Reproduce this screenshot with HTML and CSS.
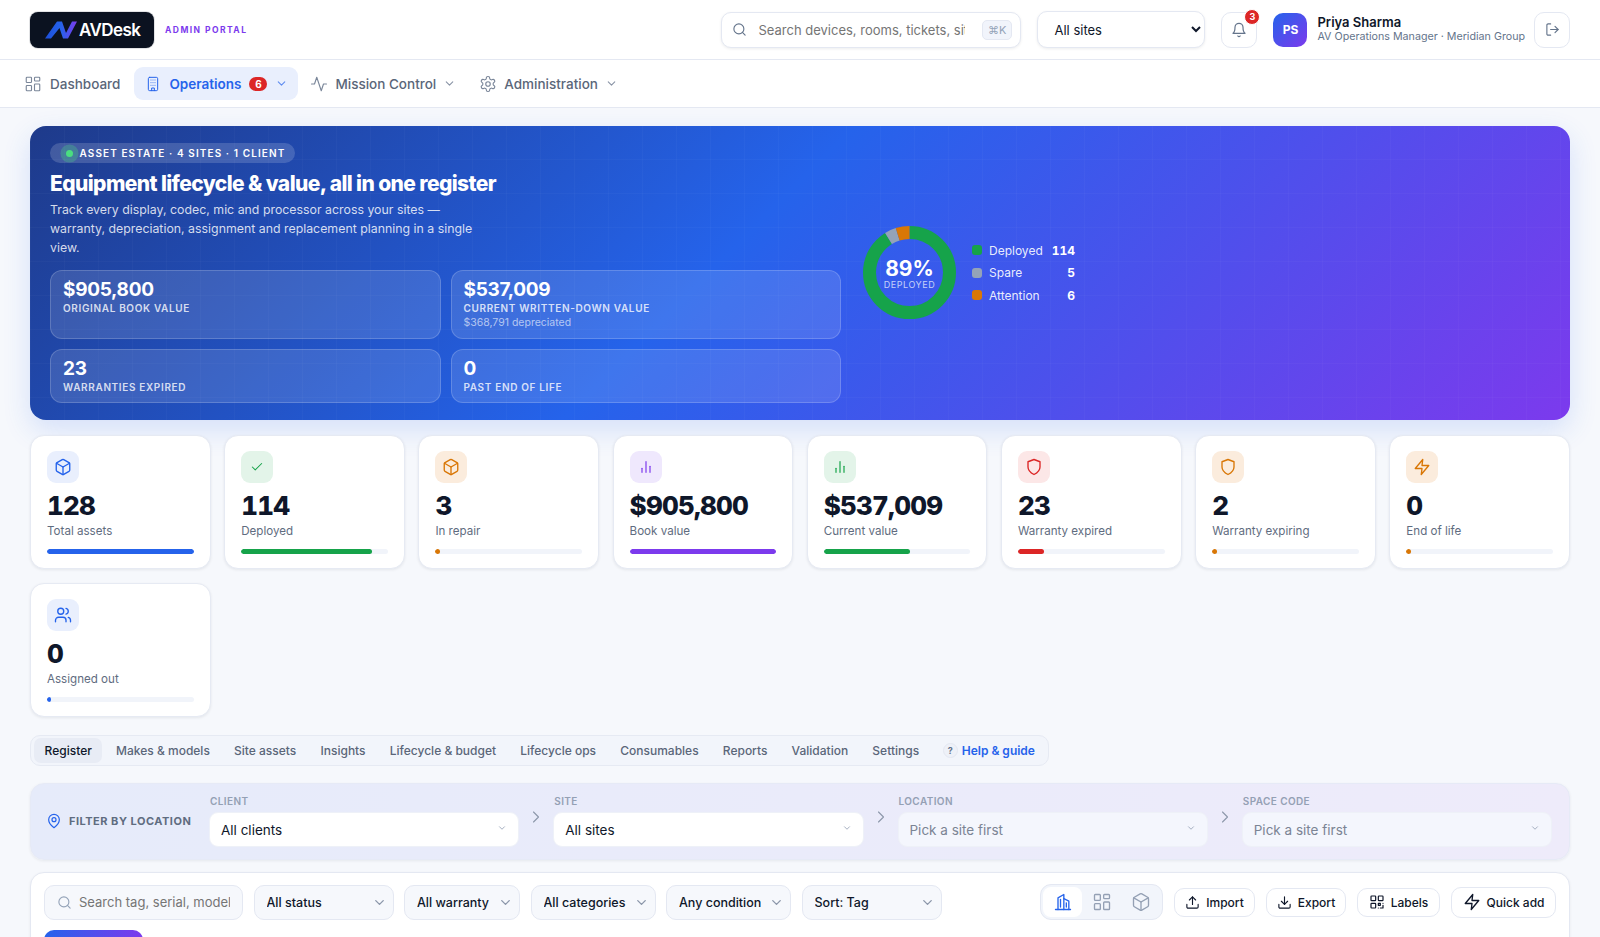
FILE: index.html
```html
<!DOCTYPE html>
<html lang="en">
<head>
<meta charset="utf-8">
<title>AVDesk Admin Portal</title>
<link rel="stylesheet" href="styles.css">
</head>
<body>
<svg class="defs" width="0" height="0" aria-hidden="true">
  <defs>
    <linearGradient id="logoGrad" x1="0" y1="0" x2="1" y2="0"><stop offset="0" stop-color="#1d4ed8"/><stop offset=".5" stop-color="#2563eb"/><stop offset="1" stop-color="#7c3aed"/></linearGradient>
    <symbol id="i-chev" viewBox="0 0 24 24"><path d="m6 9 6 6 6-6"/></symbol>
    <symbol id="i-chevr" viewBox="0 0 24 24"><path d="m9 6 6 6-6 6"/></symbol>
    <symbol id="i-search" viewBox="0 0 24 24"><circle cx="11" cy="11" r="8"/><path d="m21 21-4.3-4.3"/></symbol>
    <symbol id="i-box" viewBox="0 0 24 24"><path d="M21 8a2 2 0 0 0-1-1.73l-7-4a2 2 0 0 0-2 0l-7 4A2 2 0 0 0 3 8v8a2 2 0 0 0 1 1.73l7 4a2 2 0 0 0 2 0l7-4A2 2 0 0 0 21 16Z"/><path d="m3.3 7 8.7 5 8.7-5"/><path d="M12 22V12"/></symbol>
    <symbol id="i-bars" viewBox="0 0 24 24"><path d="M12 20V4"/><path d="M18 20v-9"/><path d="M6 20v-6"/></symbol>
    <symbol id="i-shield" viewBox="0 0 24 24"><path d="M12 22s8-4 8-10V5l-8-3-8 3v7c0 6 8 10 8 10z"/></symbol>
    <symbol id="i-zap" viewBox="0 0 24 24"><path d="M13 2 3 14h9l-1 8 10-12h-9l1-8z"/></symbol>
    <symbol id="i-dash" viewBox="0 0 24 24"><rect x="3" y="3" width="7" height="7" rx="1"/><rect x="14" y="3" width="7" height="5" rx="1"/><rect x="14" y="12" width="7" height="9" rx="1"/><rect x="3" y="14" width="7" height="7" rx="1"/></symbol>
  </defs>
</svg>

<div class="app">
  <header class="topbar">
    <div class="brand">
      <div class="logo">
        <svg class="logo-mark" viewBox="0 0 32 18" aria-hidden="true"><path fill="url(#logoGrad)" d="M0 17.5 12 .5h5l4 11.5L27 .5h5l-9 17h-5L14.5 7 6 17.5z"/></svg>
        <span class="logo-text">AVDesk</span>
      </div>
      <span class="portal">ADMIN PORTAL</span>
    </div>
    <div class="top-actions">
      <label class="top-search">
        <svg class="ico ico-15 c-slate"><use href="#i-search"/></svg>
        <input type="text" placeholder="Search devices, rooms, tickets, sites">
        <kbd>⌘K</kbd>
      </label>
      <select class="top-select"><option>All sites</option></select>
      <button class="icon-btn bell">
        <svg class="ico ico-16 c-slate" viewBox="0 0 24 24"><path d="M6 8a6 6 0 0 1 12 0c0 7 3 9 3 9H3s3-2 3-9"/><path d="M10.3 21a1.94 1.94 0 0 0 3.4 0"/></svg>
        <span class="bell-badge">3</span>
      </button>
      <div class="user">
        <div class="avatar">PS</div>
        <div class="user-text">
          <div class="user-name">Priya Sharma</div>
          <div class="user-role">AV Operations Manager · Meridian Group</div>
        </div>
      </div>
      <button class="icon-btn logout">
        <svg class="ico ico-15 c-slate" viewBox="0 0 24 24"><path d="M9 21H5a2 2 0 0 1-2-2V5a2 2 0 0 1 2-2h4"/><path d="m16 17 5-5-5-5"/><path d="M21 12H9"/></svg>
      </button>
    </div>
  </header>

  <nav class="mainnav">
    <a class="nav-item"><svg class="ico ico-18"><use href="#i-dash"/></svg>Dashboard</a>
    <a class="nav-item active">
      <svg class="ico ico-16" viewBox="0 0 24 24"><rect x="5" y="2" width="14" height="20" rx="2"/><path d="M10 22v-4h4v4M9 6h.01M12 6h.01M15 6h.01M9 10h.01M12 10h.01M15 10h.01M9 14h.01M12 14h.01M15 14h.01"/></svg>
      Operations<span class="nav-badge">6</span><svg class="ico ico-13 nav-chev"><use href="#i-chev"/></svg>
    </a>
    <a class="nav-item">
      <svg class="ico ico-18" viewBox="0 0 24 24"><path d="M22 12h-4l-3 9L9 3l-3 9H2"/></svg>
      Mission Control<svg class="ico ico-13 nav-chev"><use href="#i-chev"/></svg>
    </a>
    <a class="nav-item">
      <svg class="ico ico-18" viewBox="0 0 24 24"><path d="M12.22 2h-.44a2 2 0 0 0-2 2v.18a2 2 0 0 1-1 1.73l-.43.25a2 2 0 0 1-2 0l-.15-.08a2 2 0 0 0-2.73.73l-.22.38a2 2 0 0 0 .73 2.73l.15.1a2 2 0 0 1 1 1.72v.51a2 2 0 0 1-1 1.74l-.15.09a2 2 0 0 0-.73 2.73l.22.38a2 2 0 0 0 2.73.73l.15-.08a2 2 0 0 1 2 0l.43.25a2 2 0 0 1 1 1.73V20a2 2 0 0 0 2 2h.44a2 2 0 0 0 2-2v-.18a2 2 0 0 1 1-1.73l.43-.25a2 2 0 0 1 2 0l.15.08a2 2 0 0 0 2.73-.73l.22-.39a2 2 0 0 0-.73-2.73l-.15-.08a2 2 0 0 1-1-1.74v-.5a2 2 0 0 1 1-1.74l.15-.09a2 2 0 0 0 .73-2.73l-.22-.38a2 2 0 0 0-2.73-.73l-.15.08a2 2 0 0 1-2 0l-.43-.25a2 2 0 0 1-1-1.73V4a2 2 0 0 0-2-2z"/><circle cx="12" cy="12" r="3"/></svg>
      Administration<svg class="ico ico-13 nav-chev"><use href="#i-chev"/></svg>
    </a>
  </nav>

  <main class="content">
    <section class="hero">
      <div class="hero-left">
        <div class="hero-badge"><span class="pulse"></span>ASSET ESTATE · 4 SITES · 1 CLIENT</div>
        <h1>Equipment lifecycle &amp; value, all in one register</h1>
        <p>Track every display, codec, mic and processor across your sites — warranty, depreciation, assignment and replacement planning in a single view.</p>
        <div class="hero-stats">
          <div class="hstat"><div class="hstat-val">$905,800</div><div class="hstat-lab">ORIGINAL BOOK VALUE</div></div>
          <div class="hstat"><div class="hstat-val">$537,009</div><div class="hstat-lab">CURRENT WRITTEN-DOWN VALUE</div><div class="hstat-sub">$368,791 depreciated</div></div>
          <div class="hstat"><div class="hstat-val">23</div><div class="hstat-lab">WARRANTIES EXPIRED</div></div>
          <div class="hstat"><div class="hstat-val">0</div><div class="hstat-lab">PAST END OF LIFE</div></div>
        </div>
      </div>
      <div class="hero-chart">
        <div class="donut">
          <svg viewBox="0 0 93 93" width="93" height="93" aria-hidden="true">
            <g fill="none" stroke-width="13" transform="rotate(-90 46.5 46.5)">
              <circle cx="46.5" cy="46.5" r="40" pathLength="100" stroke="#16a34a" stroke-dasharray="91.2 8.8"/>
              <circle cx="46.5" cy="46.5" r="40" pathLength="100" stroke="#94a3b8" stroke-dasharray="4 96" stroke-dashoffset="-91.2"/>
              <circle cx="46.5" cy="46.5" r="40" pathLength="100" stroke="#d97706" stroke-dasharray="4.8 95.2" stroke-dashoffset="-95.2"/>
            </g>
          </svg>
          <div class="donut-center"><b>89%</b><span>DEPLOYED</span></div>
        </div>
        <ul class="legend">
          <li><i class="dot d-green"></i><span>Deployed</span><b>114</b></li>
          <li><i class="dot d-gray"></i><span>Spare</span><b>5</b></li>
          <li><i class="dot d-orange"></i><span>Attention</span><b>6</b></li>
        </ul>
      </div>
    </section>

    <section class="kpis">
      <article class="kpi"><div class="kpi-ico t-blue"><svg class="ico ico-18"><use href="#i-box"/></svg></div><div class="kpi-val">128</div><div class="kpi-lab">Total assets</div><div class="bar"><span class="b-blue" style="width:100%"></span></div></article>
      <article class="kpi"><div class="kpi-ico t-green"><svg class="ico ico-14" viewBox="0 0 24 24"><path d="M20 6 9 17l-5-5"/></svg></div><div class="kpi-val">114</div><div class="kpi-lab">Deployed</div><div class="bar"><span class="b-green" style="width:89%"></span></div></article>
      <article class="kpi"><div class="kpi-ico t-orange"><svg class="ico ico-18"><use href="#i-box"/></svg></div><div class="kpi-val">3</div><div class="kpi-lab">In repair</div><div class="bar"><span class="b-orange" style="width:3%"></span></div></article>
      <article class="kpi"><div class="kpi-ico t-purple"><svg class="ico ico-16"><use href="#i-bars"/></svg></div><div class="kpi-val">$905,800</div><div class="kpi-lab">Book value</div><div class="bar"><span class="b-purple" style="width:100%"></span></div></article>
      <article class="kpi"><div class="kpi-ico t-green"><svg class="ico ico-16"><use href="#i-bars"/></svg></div><div class="kpi-val">$537,009</div><div class="kpi-lab">Current value</div><div class="bar"><span class="b-green" style="width:59%"></span></div></article>
      <article class="kpi"><div class="kpi-ico t-red"><svg class="ico ico-18"><use href="#i-shield"/></svg></div><div class="kpi-val">23</div><div class="kpi-lab">Warranty expired</div><div class="bar"><span class="b-red" style="width:18%"></span></div></article>
      <article class="kpi"><div class="kpi-ico t-orange"><svg class="ico ico-18"><use href="#i-shield"/></svg></div><div class="kpi-val">2</div><div class="kpi-lab">Warranty expiring</div><div class="bar"><span class="b-orange" style="width:3%"></span></div></article>
      <article class="kpi"><div class="kpi-ico t-orange"><svg class="ico ico-18"><use href="#i-zap"/></svg></div><div class="kpi-val">0</div><div class="kpi-lab">End of life</div><div class="bar"><span class="b-orange" style="width:3%"></span></div></article>
      <article class="kpi"><div class="kpi-ico t-blue"><svg class="ico ico-18" viewBox="0 0 24 24"><path d="M16 21v-2a4 4 0 0 0-4-4H6a4 4 0 0 0-4 4v2"/><circle cx="9" cy="7" r="4"/><path d="M22 21v-2a4 4 0 0 0-3-3.87"/><path d="M16 3.13a4 4 0 0 1 0 7.75"/></svg></div><div class="kpi-val">0</div><div class="kpi-lab">Assigned out</div><div class="bar"><span class="b-blue" style="width:3%"></span></div></article>
    </section>

    <div class="tabs">
      <a class="tab on">Register</a><a class="tab">Makes &amp; models</a><a class="tab">Site assets</a><a class="tab">Insights</a><a class="tab">Lifecycle &amp; budget</a><a class="tab">Lifecycle ops</a><a class="tab">Consumables</a><a class="tab">Reports</a><a class="tab">Validation</a><a class="tab">Settings</a>
      <a class="tab help"><span class="q">?</span>Help &amp; guide</a>
    </div>

    <section class="locbar">
      <div class="loc-title">
        <svg class="ico ico-16 c-blue" viewBox="0 0 24 24"><path d="M20 10c0 6-8 12-8 12s-8-6-8-12a8 8 0 0 1 16 0Z"/><circle cx="12" cy="10" r="3"/></svg>
        FILTER BY LOCATION
      </div>
      <div class="loc-fields">
        <div class="loc-field"><label>CLIENT</label><div class="sel"><select><option>All clients</option></select><svg class="ico sel-chev"><use href="#i-chev"/></svg></div></div>
        <svg class="ico loc-sep"><use href="#i-chevr"/></svg>
        <div class="loc-field"><label>SITE</label><div class="sel"><select><option>All sites</option></select><svg class="ico sel-chev"><use href="#i-chev"/></svg></div></div>
        <svg class="ico loc-sep"><use href="#i-chevr"/></svg>
        <div class="loc-field"><label>LOCATION</label><div class="sel off"><select disabled><option>Pick a site first</option></select><svg class="ico sel-chev"><use href="#i-chev"/></svg></div></div>
        <svg class="ico loc-sep"><use href="#i-chevr"/></svg>
        <div class="loc-field"><label>SPACE CODE</label><div class="sel off"><select disabled><option>Pick a site first</option></select><svg class="ico sel-chev"><use href="#i-chev"/></svg></div></div>
      </div>
    </section>

    <section class="register">
      <div class="toolbar">
        <div class="filters">
          <label class="t-search"><svg class="ico ico-15 c-muted"><use href="#i-search"/></svg><input type="text" placeholder="Search tag, serial, model…"></label>
          <div class="tsel w-status"><select><option>All status</option></select><svg class="ico tsel-chev"><use href="#i-chev"/></svg></div>
          <div class="tsel w-warranty"><select><option>All warranty</option></select><svg class="ico tsel-chev"><use href="#i-chev"/></svg></div>
          <div class="tsel w-cat"><select><option>All categories</option></select><svg class="ico tsel-chev"><use href="#i-chev"/></svg></div>
          <div class="tsel w-cond"><select><option>Any condition</option></select><svg class="ico tsel-chev"><use href="#i-chev"/></svg></div>
          <div class="tsel w-sort"><select><option>Sort: Tag</option></select><svg class="ico tsel-chev"><use href="#i-chev"/></svg></div>
        </div>
        <div class="actions">
          <div class="views">
            <button class="view on"><svg class="ico ico-18" viewBox="0 0 24 24"><path d="M3 21h18"/><path d="M6 21V7l7-4v18"/><path d="M13 8l6 3v10"/><path d="M9 9v9"/><path d="M16 13v5"/></svg></button>
            <button class="view"><svg class="ico ico-18"><use href="#i-dash"/></svg></button>
            <button class="view"><svg class="ico ico-18"><use href="#i-box"/></svg></button>
          </div>
          <button class="btn w-import"><svg class="ico ico-15" viewBox="0 0 24 24"><path d="M21 15v4a2 2 0 0 1-2 2H5a2 2 0 0 1-2-2v-4"/><path d="m17 8-5-5-5 5"/><path d="M12 3v12"/></svg>Import</button>
          <button class="btn w-export"><svg class="ico ico-15" viewBox="0 0 24 24"><path d="M21 15v4a2 2 0 0 1-2 2H5a2 2 0 0 1-2-2v-4"/><path d="m7 10 5 5 5-5"/><path d="M12 15V3"/></svg>Export</button>
          <button class="btn w-labels"><svg class="ico ico-16" viewBox="0 0 24 24"><rect x="3" y="3" width="7" height="7" rx="1"/><rect x="14" y="3" width="7" height="7" rx="1"/><rect x="3" y="14" width="7" height="7" rx="1"/><path d="M14 14h3v3h-3zM21 14v.01M21 21h-4M14 21v-.01M21 17v4"/></svg>Labels</button>
          <button class="btn quick"><svg class="ico ico-18"><use href="#i-zap"/></svg>Quick add</button>
        </div>
      </div>
      <button class="add-btn" aria-label="Add asset"></button>
    </section>
  </main>
</div>
</body>
</html>
```
FILE: styles.css
```css
* { box-sizing: border-box; }
html, body { margin: 0; height: 100%; overflow: hidden; }
body { font-family: Inter, "Liberation Sans", sans-serif; color: #0f172a; background: #f6f8fc; }
button, input, select { font-family: inherit; }
.defs { position: absolute; }
.ico { fill: none; stroke: currentColor; stroke-width: 1.8; stroke-linecap: round; stroke-linejoin: round; flex: none; }
.ico-13 { width: 13px; height: 13px; }
.ico-14 { width: 14px; height: 14px; }
.ico-15 { width: 15px; height: 15px; }
.ico-16 { width: 16px; height: 16px; }
.ico-18 { width: 18px; height: 18px; }
.c-slate { color: #64748b; }
.c-muted { color: #94a3b8; }
.c-blue { color: #2563eb; }

.app { height: 937px; overflow: hidden; }

.topbar { height: 60px; background: #fff; border-bottom: 1px solid #e4e8f2; display: flex; align-items: center; justify-content: space-between; padding: 0 30px; }
.brand { display: flex; align-items: center; gap: 11px; }
.logo { width: 124px; height: 36px; background: #0b1220; border-radius: 8px; display: flex; align-items: center; padding-left: 15px; gap: 2px; box-shadow: 0 0 0 1px rgba(15,23,42,.12); }
.logo-mark { width: 32px; height: 18px; }
.logo-text { color: #fff; font-size: 17px; font-weight: 600; letter-spacing: -.6px; }
.portal { font-size: 8.5px; font-weight: 700; letter-spacing: 1.45px; color: #7c3aed; }
.top-actions { display: flex; align-items: center; }
.top-search { width: 300px; height: 36px; border: 1px solid #e4e8f2; border-radius: 10px; display: flex; align-items: center; padding: 0 8px 0 10px; gap: 9px; background: #fff; box-shadow: 0 1px 3px rgba(15,23,42,.08); margin-right: 16px; }
.top-search input { flex: 1; min-width: 0; border: 0; outline: 0; padding: 0 4px 0 2px; margin-right: 4px; font-size: 13px; background: none; color: #0f172a; }
input::placeholder { color: #757575; opacity: 1; }
kbd { font-family: inherit; font-size: 11px; color: #94a3b8; background: #f1f4fb; border: 1px solid #e4e8f2; border-radius: 5px; padding: 3px 5px; line-height: 12px; }
.top-select { width: 168px; height: 37px; border: 1px solid #e4e8f2; border-radius: 10px; background: #fff; font-size: 13px; color: #0f172a; padding: 0 0 0 12px; box-shadow: 0 1px 3px rgba(15,23,42,.08); margin-right: 16px; }
.icon-btn { width: 36px; height: 36px; border: 1px solid #e4e8f2; border-radius: 10px; background: #fff; display: flex; align-items: center; justify-content: center; padding: 0; position: relative; }
.bell-badge { position: absolute; top: -4px; right: -4px; width: 16px; height: 16px; border-radius: 50%; background: #dc2626; border: 1px solid #fff; color: #fff; font-size: 9px; font-weight: 700; display: flex; align-items: center; justify-content: center; }
.user { display: flex; align-items: center; gap: 10px; margin: 0 9px 0 16px; }
.avatar { width: 34px; height: 34px; border-radius: 10px; background: linear-gradient(135deg, #2563eb, #7c3aed); color: #fff; font-size: 12px; font-weight: 700; display: flex; align-items: center; justify-content: center; }
.user-text { padding-bottom: 2px; }
.user-name { font-size: 13px; font-weight: 600; line-height: 15px; }
.user-role { font-size: 10.7px; color: #64748b; line-height: 13px; }

.mainnav { height: 48px; background: #fff; border-bottom: 1px solid #e4e8f2; display: flex; align-items: center; padding: 0 13px; }
.nav-item { height: 33px; display: flex; align-items: center; font-size: 13.5px; font-weight: 500; color: #5a6679; padding: 0 11px; border-radius: 9px; gap: 7px; }
.nav-item + .nav-item { margin-left: 1px; }
.nav-item:first-child { gap: 8px; }
.nav-item .ico { stroke-width: 1.5; color: #7a8699; }
.nav-item.active { background: #e9effd; color: #2563eb; font-weight: 600; width: 164px; padding-left: 11px; margin-left: 3px; gap: 8px; }
.nav-item.active .ico { color: #2563eb; }
.nav-item .nav-chev { stroke-width: 2; color: #8a94a6; }
.nav-item.active .nav-chev { color: #5f8cf0; }
.nav-badge { min-width: 18px; height: 14px; border-radius: 8px; background: #dc2626; color: #fff; font-size: 10px; font-weight: 700; display: flex; align-items: center; justify-content: center; }

.content { padding: 18px 30px; display: flex; flex-direction: column; }

.hero { height: 294px; border-radius: 16px; padding: 17px 20px; color: #fff; display: flex; gap: 22px;
  background:
    linear-gradient(rgba(255,255,255,.025) 1px, transparent 1px) 0 -1px / 34px 34px,
    linear-gradient(90deg, rgba(255,255,255,.025) 1px, transparent 1px) 0 0 / 34px 34px,
    linear-gradient(135deg, #1e3a8a 0%, #2563eb 45%, #7c3aed 100%);
  box-shadow: 0 10px 28px rgba(37,99,235,.16); }
.hero-left { width: 791px; flex: none; }
.hero-badge { display: flex; width: fit-content; align-items: center; height: 20px; padding: 0 10px 0 16px; gap: 6.5px; border-radius: 10px; background: rgba(255,255,255,.16); font-size: 10px; font-weight: 600; letter-spacing: 1.1px; }
.pulse { width: 7px; height: 7px; border-radius: 50%; background: #4ade80; box-shadow: 0 0 0 5.5px rgba(74,222,128,.28); }
.hero h1 { margin: 7px 0 3px; font-size: 21px; line-height: 28px; font-weight: 800; letter-spacing: -.6px; }
.hero p { margin: 0; width: 435px; font-size: 12.35px; line-height: 18.85px; color: rgba(255,255,255,.82); }
.hero-stats { margin-top: 12px; display: grid; grid-template-columns: 1fr 1fr; grid-template-rows: 69px 54px; gap: 10px; }
.hstat { background: rgba(255,255,255,.12); border: 1px solid rgba(255,255,255,.18); border-radius: 12px; padding: 7px 12px; }
.hstat-val { font-size: 19px; line-height: 24px; font-weight: 700; letter-spacing: -.3px; }
.hstat-lab { font-size: 10px; line-height: 13px; font-weight: 600; letter-spacing: .65px; color: rgba(255,255,255,.8); }
.hstat-sub { font-size: 10.5px; line-height: 16px; color: rgba(255,255,255,.62); }
.hero-chart { display: flex; align-items: center; gap: 16px; margin-top: 83px; height: 93px; }
.donut { position: relative; width: 93px; height: 93px; }
.donut svg { display: block; }
.donut-center { position: absolute; inset: 0; display: flex; flex-direction: column; align-items: center; justify-content: center; padding-top: 2px; }
.donut-center b { font-size: 21px; line-height: 24px; font-weight: 700; }
.donut-center span { margin-top: -2px; font-size: 9px; line-height: 11px; letter-spacing: .55px; color: rgba(255,255,255,.72); }
.legend { list-style: none; margin: 0; padding: 0; display: grid; gap: 0; }
.legend li { display: grid; grid-template-columns: 10px 54px 25px; column-gap: 7px; align-items: center; height: 22.5px; font-size: 12px; color: rgba(255,255,255,.9); }
.legend li span { white-space: nowrap; }
.legend b { text-align: right; font-weight: 700; color: #fff; font-variant-numeric: tabular-nums; }
.dot { width: 10px; height: 10px; border-radius: 3px; }
.d-green { background: #16a34a; }
.d-gray { background: #94a3b8; }
.d-orange { background: #d97706; }

.kpis { margin-top: 15px; display: grid; grid-template-columns: repeat(8, 1fr); gap: 14px 13.5px; }
.kpi { height: 134px; background: #fff; border: 1px solid #e6eaf3; border-radius: 14px; padding: 15px 16px; box-shadow: 0 1px 3px rgba(15,23,42,.08); }
.kpi-ico { width: 32px; height: 32px; border-radius: 9px; display: flex; align-items: center; justify-content: center; }
.t-blue { background: #e9effd; color: #2563eb; }
.t-green { background: #e3f4e9; color: #16a34a; }
.t-orange { background: #fbecdd; color: #d97706; }
.t-purple { background: #efe8fd; color: #7c3aed; }
.t-red { background: #fce7e7; color: #dc2626; }
.kpi-val { margin-top: 7px; font-size: 26px; line-height: 32px; font-weight: 800; letter-spacing: -.8px; white-space: nowrap; font-variant-numeric: tabular-nums; }
.kpi-lab { margin-top: 1px; font-size: 11.6px; line-height: 16px; color: #5f6c80; }
.bar { margin-top: 10px; height: 5px; border-radius: 3px; background: #f1f4fa; overflow: hidden; }
.bar span { display: block; height: 100%; border-radius: 3px; }
.b-blue { background: #2563eb; }
.b-green { background: #16a34a; }
.b-orange { background: #d97706; }
.b-purple { background: #7c3aed; }
.b-red { background: #dc2626; }

.tabs { margin-top: 18px; align-self: flex-start; height: 31px; display: flex; align-items: center; gap: 3px; padding: 0 3px; background: #f2f5fb; border: 1px solid #e6eaf3; border-radius: 10px; }
.tab { height: 25px; display: flex; align-items: center; font-size: 12px; font-weight: 500; color: #5a6679; padding: 0 10.6px; border-radius: 7px; white-space: nowrap; }
.tab.on { background: #e8ecf5; color: #0f172a; }
.tab.help { color: #2563eb; font-weight: 600; gap: 4px; padding-left: 10px; padding-right: 10px; }
.q { width: 15px; height: 15px; border-radius: 50%; background: #eef1f8; border: 1px solid #e4e8f2; color: #64748b; font-size: 9px; font-weight: 700; display: flex; align-items: center; justify-content: center; }

.locbar { margin-top: 17px; height: 77px; border-radius: 14px; background: linear-gradient(90deg, #e6ebfa, #eeebfa); border: 1px solid #e6eaf6; box-shadow: 0 1px 3px rgba(15,23,42,.07); display: flex; padding: 0 17px 0 15px; }
.loc-title { width: 163px; flex: none; display: flex; align-items: center; gap: 7px; font-size: 11px; font-weight: 700; letter-spacing: .5px; color: #5f6c80; padding-bottom: 1px; }
.loc-fields { flex: 1; display: grid; grid-template-columns: 1fr 34px 1fr 34px 1fr 34px 1fr; align-items: end; padding-bottom: 12px; }
.loc-field label { display: block; margin: 0 0 4px 1px; font-size: 10px; line-height: 13px; font-weight: 600; letter-spacing: .4px; color: #94a0b4; }
.sel { position: relative; height: 35px; }
.sel select { width: 100%; height: 35px; appearance: none; border: 1px solid #eef1f8; border-radius: 9px; background: #fff; font-size: 13.5px; color: #0f172a; padding: 0 24px 0 11px; outline: 0; opacity: 1; }
.sel.off select { background: #f4f6fd; color: #7b8494; }
.sel-chev { position: absolute; right: 12px; top: 11px; width: 10px; height: 10px; color: #94a0b4; pointer-events: none; stroke-width: 2; }
.loc-sep { width: 20px; height: 20px; justify-self: center; align-self: center; color: #8c97aa; stroke-width: 1.3; position: relative; top: 1px; }

.register { margin-top: 12px; height: 200px; background: #fff; border: 1px solid #e4e8f2; border-radius: 14px; padding: 11px 13px; box-shadow: 0 1px 3px rgba(15,23,42,.06); }
.toolbar { display: flex; align-items: center; justify-content: space-between; }
.filters { display: flex; align-items: center; gap: 10.5px; }
.t-search { width: 199px; height: 35px; border: 1px solid #e4e8f2; border-radius: 10px; background: #f6f8fc; display: flex; align-items: center; padding: 0 10px 0 12px; gap: 5px; }
.t-search input { flex: 1; min-width: 0; border: 0; outline: 0; background: none; font-size: 13px; }
.tsel { position: relative; height: 35px; }
.tsel select { width: 100%; height: 35px; appearance: none; border: 1px solid #e4e8f2; border-radius: 10px; background: #f6f8fc; font-size: 12.5px; font-weight: 500; color: #0f172a; padding: 0 24px 0 12px; outline: 0; }
.tsel-chev { position: absolute; right: 7px; top: 10px; width: 15px; height: 15px; color: #8c97aa; stroke-width: 2.2; pointer-events: none; }
.w-status { width: 140px; }
.w-warranty { width: 116px; }
.w-cat { width: 125px; }
.w-cond { width: 125px; }
.w-sort { width: 140px; }
.actions { display: flex; align-items: center; gap: 11px; }
.views { width: 123px; height: 36px; display: flex; align-items: center; padding: 2px; gap: 0; background: #f2f5fb; border: 1px solid #e4e8f2; border-radius: 11px; }
.view { flex: 1; height: 30px; border: 0; background: none; display: flex; align-items: center; justify-content: center; padding: 0; color: #94a0b4; border-radius: 8px; }
.view .ico { width: 20px; height: 20px; stroke-width: 1.6; }
.view.on { background: #fff; color: #2563eb; }
.btn { height: 29px; border: 1px solid #e4e8f2; border-radius: 10px; background: #fff; display: flex; align-items: center; justify-content: center; gap: 6px; padding: 0; font-size: 12px; font-weight: 500; color: #0f172a; }
.w-import { width: 81px; }
.w-export { width: 80px; }
.w-labels { width: 83px; }
.quick { width: 105px; height: 31px; }
.add-btn { display: block; margin-top: 10px; width: 99px; height: 40px; border: 0; border-radius: 10px; background: linear-gradient(90deg, #2563eb, #7c3aed); }
```
